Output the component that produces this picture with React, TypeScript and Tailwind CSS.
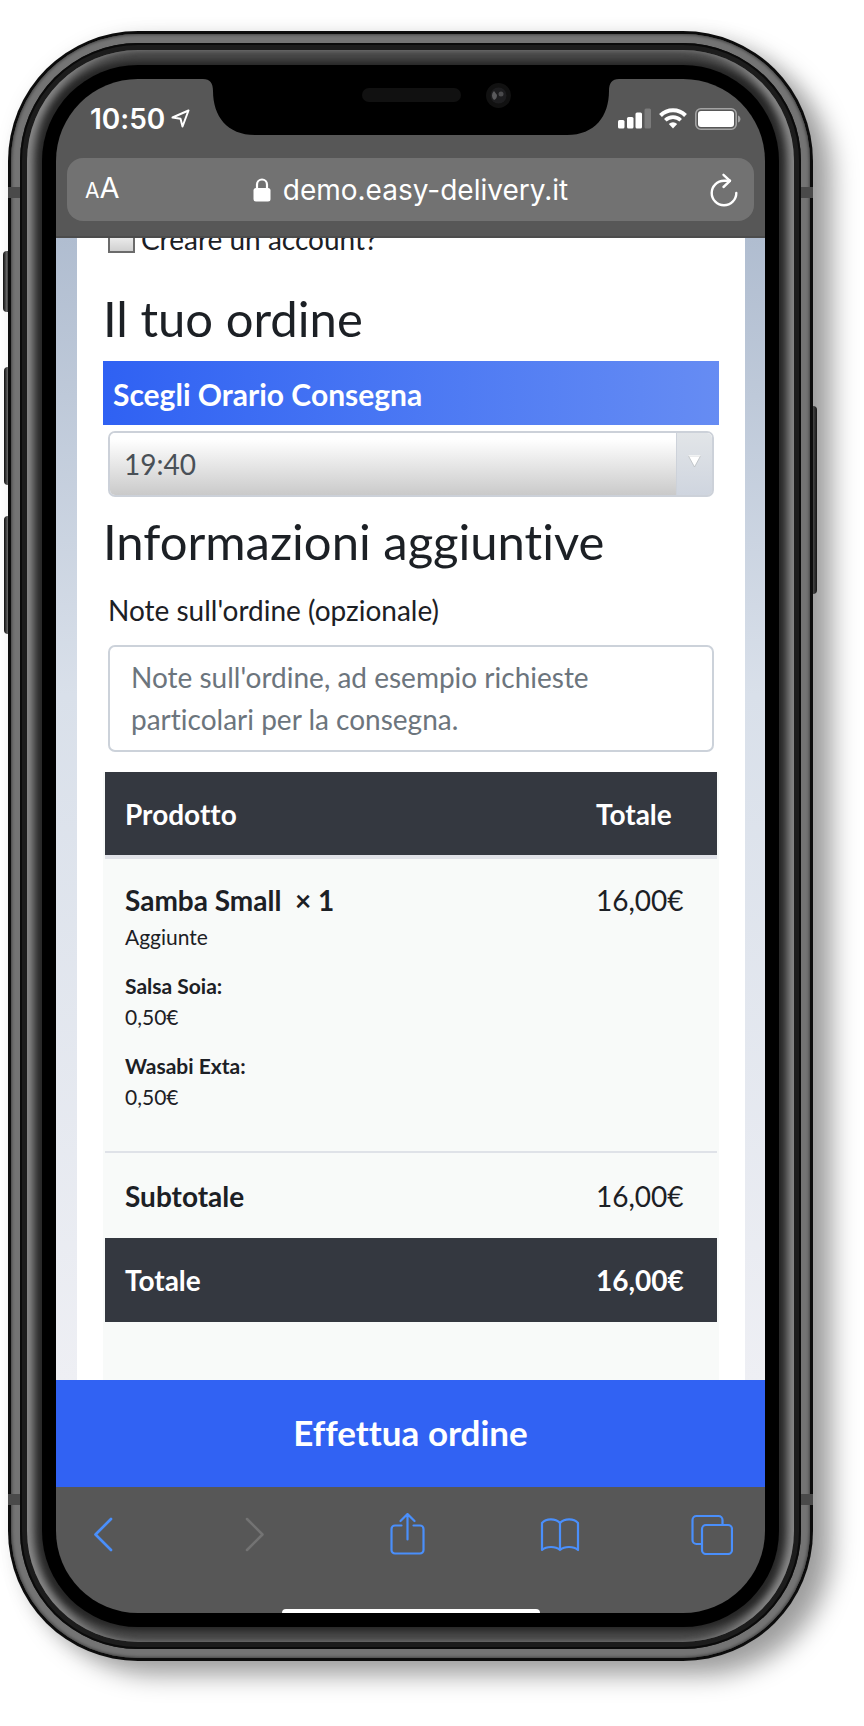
import type { ReactNode } from "react";

const extras = [
  { name: "Salsa Soia:", price: "0,50€" },
  { name: "Wasabi Exta:", price: "0,50€" },
];

function Hardware() {
  return (
    <div aria-hidden="true">
      <span className="absolute -left-[5px] top-[220px] h-[61px] w-[7px] rounded-l-sm bg-linear-to-r from-[#111] via-[#666] to-[#222]" />
      <span className="absolute -left-1 top-[336px] h-[118px] w-[7px] rounded-l-sm bg-linear-to-r from-[#111] via-[#666] to-[#222]" />
      <span className="absolute -left-1 top-[485px] h-[118px] w-[7px] rounded-l-sm bg-linear-to-r from-[#111] via-[#666] to-[#222]" />
      <span className="absolute -right-1 top-[375px] h-[188px] w-[7px] rounded-r-sm bg-linear-to-r from-[#111] via-[#666] to-[#222]" />
    </div>
  );
}

function AntennaBands() {
  return (
    <div aria-hidden="true">
      <span className="absolute left-0 top-[156px] h-[11px] w-3 bg-[#4a4a4a]" />
      <span className="absolute right-0 top-[156px] h-[11px] w-3 bg-[#4a4a4a]" />
      <span className="absolute bottom-[156px] left-0 h-[11px] w-3 bg-[#4a4a4a]" />
      <span className="absolute bottom-[156px] right-0 h-[11px] w-3 bg-[#4a4a4a]" />
    </div>
  );
}

function Frame({ children }: { children: ReactNode }) {
  return (
    <div className="relative">
      <Hardware />
      <div className="relative rounded-[130px] bg-[#0c0c0c] p-[3px] shadow-[20px_15px_24px_rgba(0,0,0,0.35),4px_2px_20px_rgba(0,0,0,0.08)]">
        <AntennaBands />
        <div className="rounded-[127px] bg-[#747474] p-[9px] shadow-[inset_0_0_3px_1px_#444]">
          <div className="rounded-[118px] bg-[#1c1c1c] p-[7px] shadow-[inset_0_0_0_2px_#0a0a0a]">
            <div className="rounded-[111px] bg-[#262626] p-[15px] shadow-[inset_10px_0_9px_-3px_#8a8a8a,inset_-10px_0_9px_-3px_#8a8a8a,inset_0_18px_6px_-7px_#484848,inset_0_-18px_6px_-7px_#484848]">
              <div className="rounded-[96px] bg-black p-3.5">
                <div className="flex flex-col overflow-hidden rounded-[82px] bg-[#575757]">{children}</div>
              </div>
            </div>
          </div>
        </div>
      </div>
    </div>
  );
}

function Notch() {
  return (
    <svg width="408" height="79" viewBox="206 79 408 79" className="shrink-0 overflow-visible" aria-hidden="true">
      <path d="M202 78 V79 C209 79 212 83 212 91 C212 116 226 135 254 135 H566 C594 135 608 116 608 91 C608 83 611 79 618 79 V78 Z" fill="#000" />
      <rect x="361" y="88" width="99" height="14" rx="7" fill="#111" />
      <circle cx="497.500" cy="95.500" r="12.500" fill="#111" />
      <circle cx="497.500" cy="95.500" r="8" fill="#1d1d1f" />
      <path d="M493 91 a6 6 0 0 0 0 9 q3 -1 3 -5 z" fill="#5a5a5c" />
      <circle cx="500" cy="94" r="2.500" fill="#4a4a4c" />
    </svg>
  );
}

function StatusBar() {
  return (
    <div className="flex h-[79px] items-center font-['Inter',sans-serif] text-white">
      <div className="flex min-w-0 flex-1 items-center gap-1.5">
        <span className="ml-[34px] text-[28px] leading-8 font-semibold">10:50</span>
        <svg width="19" height="19" viewBox="0 0 19 19" fill="none" stroke="#fff" strokeWidth="2" strokeLinejoin="round" className="shrink-0" aria-hidden="true">
          <path d="M17.500 1.500 L1.500 8.500 L9.500 9.800 L11.500 17.500 Z" />
        </svg>
      </div>
      <Notch />
      <div className="flex min-w-0 flex-1 items-center gap-2">
        <svg width="33" height="21" viewBox="0 0 33 21" fill="#fff" className="ml-[3px] shrink-0" aria-hidden="true">
          <rect x="0" y="12" width="6.500" height="8.500" rx="1.500" />
          <rect x="9" y="9" width="6.500" height="11.500" rx="1.500" />
          <rect x="17.500" y="4.500" width="6.500" height="16" rx="1.500" />
          <rect x="26.500" y="0.500" width="6.500" height="20" rx="1.500" fill="#7b7b7b" />
        </svg>
        <svg width="28" height="21" viewBox="0 0 28 21" fill="none" stroke="#fff" strokeWidth="4" className="shrink-0" aria-hidden="true">
          <path d="M1.500 7.500 A17.800 17.800 0 0 1 26.500 7.500" />
          <path d="M6.300 12.300 A11 11 0 0 1 21.700 12.300" strokeWidth="3.600" />
          <path d="M9.800 16 A6.200 6.200 0 0 1 18.200 16 L14 20.500 Z" fill="#fff" stroke="none" />
        </svg>
        <svg width="46" height="22" viewBox="0 0 46 22" className="shrink-0" aria-hidden="true">
          <rect x="0.800" y="0.800" width="40.400" height="20.400" rx="5" fill="none" stroke="#a3a3a3" strokeWidth="1.600" />
          <rect x="3" y="3" width="36" height="16" rx="3" fill="#fff" />
          <path d="M43 7.500 C46.300 8.500 46.300 13.500 43 14.500 Z" fill="#a3a3a3" />
        </svg>
      </div>
    </div>
  );
}

function AddressBar() {
  return (
    <div className="border-b-2 border-[#4c4c4c] px-[11px] pb-[15px] font-['Inter',sans-serif] text-white">
      <div className="flex h-[63px] items-center justify-between rounded-[16px] bg-[#727272] px-[15px]">
        <button type="button" aria-label="Dimensione testo" className="flex w-11 items-baseline pl-[3px]">
          <span className="text-[21px] leading-8">A</span>
          <span className="text-[29px] leading-8">A</span>
        </button>
        <a href="#ordine" className="flex items-center gap-3">
          <svg width="18" height="24" viewBox="0 0 18 24" aria-hidden="true">
            <rect x="0.500" y="10" width="17" height="13.500" rx="2.500" fill="#fff" />
            <path d="M4 11 V6.500 a5 5 0 0 1 10 0 V11" fill="none" stroke="#fff" strokeWidth="2.200" />
          </svg>
          <span className="text-[28px] leading-8">demo.easy-delivery.it</span>
        </a>
        <button type="button" aria-label="Ricarica" className="flex w-11 justify-end">
          <svg width="30" height="34" viewBox="0 0 30 34" fill="none" stroke="#fff" strokeWidth="2.400" strokeLinecap="round" strokeLinejoin="round" aria-hidden="true">
            <path d="M21 7.700 L15 7.700 A12.300 12.300 0 1 0 27.300 20" />
            <path d="M14.500 1.800 L21 7.900 L14.500 14" />
          </svg>
        </button>
      </div>
    </div>
  );
}

function OrderForm() {
  return (
    <div className="overflow-hidden bg-linear-to-b from-[#b0bdd0] from-0% via-[#d9e0ea] via-40% to-[#eeeff4] to-100% pr-5 pl-[21px] text-[28px] leading-[42px] text-[#1c2025]">
      <div className="bg-white px-[26px]">
        <div className="-mt-5 flex h-[42px] items-center gap-1.5 pl-[5px]">
          <input
            id="account"
            type="checkbox"
            className="size-[27px] appearance-none border-2 border-[#6b6b6b] bg-linear-to-b from-white to-[#d0d0d0]"
          />
          <label htmlFor="account">Creare un account?</label>
        </div>
        <h2 className="mt-7 text-[49px] leading-[60px]">Il tuo ordine</h2>
        <label
          htmlFor="orario"
          className="mt-[13px] block h-16 bg-linear-to-r from-[#2f61f3] to-[#668cf3] pl-2.5 text-[30px] leading-[66px] font-bold text-white"
        >
          Scegli Orario Consegna
        </label>
        <div className="relative mx-[5px] mt-1.5 h-[66px] overflow-hidden rounded-[7px] border-2 border-[#ccd1d9]">
          <select
            id="orario"
            defaultValue="19:40"
            className="size-full appearance-none bg-linear-to-b from-white from-10% to-[#cacaca] pl-3.5 text-[#495057]"
          >
            <option value="19:40">19:40</option>
          </select>
          <span className="pointer-events-none absolute inset-y-0 right-0 flex w-9 justify-center border-l border-[#cdd2da] bg-linear-to-b from-[#e2e5e8] to-[#cfd5df] pt-[22px]">
            <svg width="13" height="13" viewBox="0 0 13 13" aria-hidden="true">
              <path d="M0.500 1 H12.500 L6.500 12 Z" fill="#fff" stroke="#b9bcc0" strokeWidth="0.800" />
              <path d="M0.500 0.800 H12.500" stroke="#fff" />
            </svg>
          </span>
        </div>
        <h2 className="mt-3.5 text-[49px] leading-[60px]">Informazioni aggiuntive</h2>
        <label htmlFor="note" className="mt-[18px] block pl-[5px]">
          Note sull'ordine (opzionale)
        </label>
        <div className="mx-[5px] mt-3.5 flex">
          <textarea
            id="note"
            rows={2}
            placeholder="Note sull'ordine, ad esempio richieste particolari per la consegna."
            className="h-[107px] min-w-0 flex-1 resize-none overflow-hidden rounded-[7px] border-2 border-[#ccd2da] bg-white px-[21px] pt-[9px] placeholder:text-[#6c757d]"
          />
        </div>
        <div className="mt-5 bg-[#f8faf9] px-0.5 pb-[58px]">
          <table className="w-full border-collapse text-left">
            <thead>
              <tr className="h-[85px] bg-[#343840] text-white">
                <th scope="col" className="pl-5 font-bold">Prodotto</th>
                <th scope="col" className="w-[121px] font-bold">Totale</th>
              </tr>
            </thead>
            <tbody>
              <tr className="border-t-4 border-[#e0e2e8] align-top">
                <td className="pt-5 pb-[39px] pl-5">
                  <p className="font-bold">Samba Small&nbsp; × 1</p>
                  <div className="flex flex-col gap-[18px] text-[21px] leading-[31px]">
                    <p>Aggiunte</p>
                    {extras.map((extra) => (
                      <div key={extra.name}>
                        <p className="font-bold">{extra.name}</p>
                        <p>{extra.price}</p>
                      </div>
                    ))}
                  </div>
                </td>
                <td className="pt-5">16,00€</td>
              </tr>
            </tbody>
            <tfoot>
              <tr className="h-[86px] border-t-2 border-[#dfe2e8]">
                <th scope="row" className="pl-5 font-bold">Subtotale</th>
                <td>16,00€</td>
              </tr>
              <tr className="h-[84px] bg-[#343840] font-bold text-white">
                <th scope="row" className="pl-5">Totale</th>
                <td>16,00€</td>
              </tr>
            </tfoot>
          </table>
        </div>
      </div>
    </div>
  );
}

function ToolButton({ label, disabled, children }: { label: string; disabled?: boolean; children: ReactNode }) {
  return (
    <button type="button" aria-label={label} disabled={disabled} className="text-[#4a8ffb] disabled:text-[#737373]">
      <svg width="42" height="42" viewBox="0 0 42 42" fill="none" stroke="currentColor" strokeWidth="2.200" strokeLinecap="round" strokeLinejoin="round">
        {children}
      </svg>
    </button>
  );
}

function Toolbar() {
  return (
    <div className="flex flex-col">
      <div className="flex h-[122px] items-start justify-between pt-[26px] pr-8 pl-[26px]">
        <ToolButton label="Indietro">
          <path d="M29 6 L13.500 21.500 L29 37" strokeWidth="2.700" />
        </ToolButton>
        <ToolButton label="Avanti" disabled>
          <path d="M13 6 L28.500 21.500 L13 37" strokeWidth="2.500" />
        </ToolButton>
        <ToolButton label="Condividi">
          <path d="M14.500 12.500 H8 a3.500 3.500 0 0 0 -3.500 3.500 V37 a3.500 3.500 0 0 0 3.500 3.500 H33 a3.500 3.500 0 0 0 3.500 -3.500 V16 a3.500 3.500 0 0 0 -3.500 -3.500 H26.500" />
          <path d="M20.500 26.500 V1.500 M13.500 8 L20.500 1 L27.500 8" />
        </ToolButton>
        <ToolButton label="Segnalibri">
          <path d="M21 10 C16.500 5.500 7.500 5 3 10 V37 C7.500 33 16.500 33 21 37 C25.500 33 34.500 33 39 37 V10 C34.500 5 25.500 5.500 21 10 V37" />
        </ToolButton>
        <ToolButton label="Pannelli">
          <path d="M11 31 H5.500 a4 4 0 0 1 -4 -4 V7 a4 4 0 0 1 4 -4 H27.500 a4 4 0 0 1 4 4 V12" />
          <rect x="11" y="12" width="30" height="29" rx="4" />
        </ToolButton>
      </div>
      <span className="h-1 w-[258px] self-center rounded-t-md bg-white" />
    </div>
  );
}

export default function App() {
  return (
    <div className="min-h-screen bg-white pt-[31px] pr-[51px] pb-[65px] pl-2 font-['Lato',sans-serif] [font-variant-ligatures:none]">
      <Frame>
        <StatusBar />
        <AddressBar />
        <OrderForm />
        <button type="button" className="h-[107px] bg-[#3162f3] pb-1 text-[35px] leading-[50px] font-bold text-white">
          Effettua ordine
        </button>
        <Toolbar />
      </Frame>
    </div>
  );
}
